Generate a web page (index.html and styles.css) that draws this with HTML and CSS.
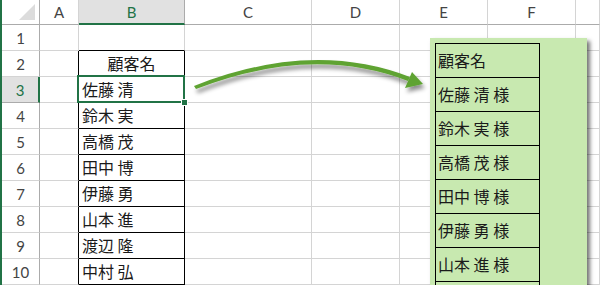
FILE: index.html
```html
<!DOCTYPE html>
<html lang="ja">
<head>
<meta charset="utf-8">
<title>顧客名</title>
<link rel="stylesheet" href="styles.css">
</head>
<body>
<div class="sheet">
  <div class="grid">
    <div class="corner"><span class="tri"></span></div>
    <div class="ch">A</div>
    <div class="ch ch-active">B</div>
    <div class="ch">C</div>
    <div class="ch">D</div>
    <div class="ch">E</div>
    <div class="ch">F</div>
    <div class="ch"></div>

    <div class="rh">1</div><div class="c"></div><div class="c b-top"></div><div class="c"></div><div class="c"></div><div class="c"></div><div class="c"></div><div class="c"></div>
    <div class="rh">2</div><div class="c a-edge"></div><div class="c b center">顧客名</div><div class="c"></div><div class="c"></div><div class="c"></div><div class="c"></div><div class="c"></div>
    <div class="rh rh-active">3</div><div class="c a-edge"></div><div class="c b active">佐藤 清<span class="handle"></span></div><div class="c"></div><div class="c"></div><div class="c"></div><div class="c"></div><div class="c"></div>
    <div class="rh">4</div><div class="c a-edge"></div><div class="c b">鈴木 実</div><div class="c"></div><div class="c"></div><div class="c"></div><div class="c"></div><div class="c"></div>
    <div class="rh">5</div><div class="c a-edge"></div><div class="c b">高橋 茂</div><div class="c"></div><div class="c"></div><div class="c"></div><div class="c"></div><div class="c"></div>
    <div class="rh">6</div><div class="c a-edge"></div><div class="c b">田中 博</div><div class="c"></div><div class="c"></div><div class="c"></div><div class="c"></div><div class="c"></div>
    <div class="rh">7</div><div class="c a-edge"></div><div class="c b">伊藤 勇</div><div class="c"></div><div class="c"></div><div class="c"></div><div class="c"></div><div class="c"></div>
    <div class="rh">8</div><div class="c a-edge"></div><div class="c b">山本 進</div><div class="c"></div><div class="c"></div><div class="c"></div><div class="c"></div><div class="c"></div>
    <div class="rh">9</div><div class="c a-edge"></div><div class="c b">渡辺 隆</div><div class="c"></div><div class="c"></div><div class="c"></div><div class="c"></div><div class="c"></div>
    <div class="rh">10</div><div class="c a-edge"></div><div class="c b">中村 弘</div><div class="c"></div><div class="c"></div><div class="c"></div><div class="c"></div><div class="c"></div>
  </div>

  <svg class="arrow" width="600" height="285" viewBox="0 0 600 285" xmlns="http://www.w3.org/2000/svg">
    <defs>
      <filter id="sh" x="-10%" y="-50%" width="120%" height="200%">
        <feDropShadow dx="2" dy="4" stdDeviation="2" flood-color="#000" flood-opacity="0.45"/>
      </filter>
    </defs>
    <g filter="url(#sh)" fill="#5ea332">
      <path d="M194,86 Q312,39 410,77 L408,81 Q312,44 196,89 Z"/>
      <path d="M412,72 L423,84 L405,88 Z"/>
    </g>
  </svg>

  <div class="panel">
    <div class="list">
      <div class="item">顧客名</div>
      <div class="item">佐藤 清 様</div>
      <div class="item">鈴木 実 様</div>
      <div class="item">高橋 茂 様</div>
      <div class="item">田中 博 様</div>
      <div class="item">伊藤 勇 様</div>
      <div class="item">山本 進 様</div>
      <div class="item"></div>
    </div>
  </div>
</div>
</body>
</html>
```

FILE: styles.css
```css
html, body {
  margin: 0;
  padding: 0;
  background: #ffffff;
}

.sheet {
  position: relative;
  width: 600px;
  height: 285px;
  overflow: hidden;
  box-sizing: border-box;
  border-left: 2px solid #217346;
  font-family: "Noto Sans CJK JP", sans-serif;
}

.grid {
  display: grid;
  grid-template-columns: 38px 39px 106px 127px 88px 88px 88px 24px;
  grid-template-rows: 25px repeat(10, 26px);
}

.grid > div {
  box-sizing: border-box;
}

.corner {
  position: relative;
  border-right: 1px solid #ababab;
  border-bottom: 1px solid #ababab;
}

.tri {
  position: absolute;
  right: 4px;
  bottom: 4px;
  width: 0;
  height: 0;
  border-left: 16px solid transparent;
  border-bottom: 16px solid #dcdcdc;
}

.ch {
  display: flex;
  align-items: center;
  justify-content: center;
  font-family: Lato, "Liberation Sans", sans-serif;
  font-size: 15px;
  color: #444444;
  border-right: 1px solid #d4d4d4;
  border-bottom: 1px solid #ababab;
}

.ch-active {
  background: #e1e1e1;
  color: #217346;
  border-bottom: 2px solid #217346;
  border-right-color: #ababab;
}

.rh {
  display: flex;
  align-items: center;
  justify-content: center;
  font-family: Lato, "Liberation Sans", sans-serif;
  font-size: 15px;
  color: #444444;
  border-right: 1px solid #ababab;
  border-bottom: 1px solid #d4d4d4;
}

.rh-active {
  background: #e1e1e1;
  color: #217346;
  border-right: 2px solid #217346;
  border-bottom-color: #ababab;
}

.c {
  border-right: 1px solid #d4d4d4;
  border-bottom: 1px solid #d4d4d4;
  font-size: 16px;
  line-height: 25px;
  color: #1a1a1a;
  white-space: nowrap;
}

.b-top {
  border-bottom-color: #000000;
}

.a-edge {
  border-right-color: #000000;
}

.b {
  border-right-color: #000000;
  border-bottom-color: #000000;
  padding-left: 3px;
}

.center {
  text-align: center;
  padding-left: 0;
}

.active {
  position: relative;
}

.active::after {
  content: "";
  position: absolute;
  left: -2px;
  top: -2px;
  right: -1px;
  bottom: -1px;
  border: 2px solid #217346;
}

.handle {
  position: absolute;
  right: -4px;
  bottom: -4px;
  width: 5px;
  height: 5px;
  background: #217346;
  border: 1px solid #ffffff;
  z-index: 2;
}

.arrow {
  position: absolute;
  left: -2px;
  top: 0;
}

.panel {
  position: absolute;
  left: 428px;
  top: 38px;
  width: 157px;
  height: 300px;
  box-sizing: border-box;
  padding: 5px 0 0 5px;
  background: #c8e9b0;
  box-shadow: 3px 3px 4px rgba(0, 0, 0, 0.55);
}

.list {
  width: 104px;
  border-top: 1px solid #000000;
  border-left: 1px solid #000000;
}

.item {
  box-sizing: border-box;
  height: 34px;
  line-height: 33px;
  padding-left: 2px;
  border-right: 1px solid #000000;
  border-bottom: 1px solid #000000;
  font-size: 16px;
  color: #1a1a1a;
  white-space: nowrap;
}
```
